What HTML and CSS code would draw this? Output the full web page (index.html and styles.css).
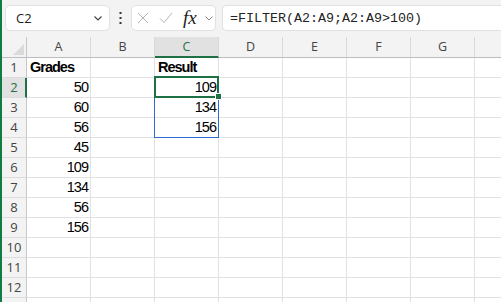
FILE: index.html
```html
<!DOCTYPE html>
<html lang="en">
<head>
  <meta charset="UTF-8" />
  <title>Grades - Sheet</title>
  <link rel="stylesheet" href="styles.css">
</head>

<body>

  <!-- Formula bar -->
  <div class="toolbar">
    <div class="name-box">
      <span>C2</span>
      <svg width="8" height="5" viewBox="0 0 8 5"><path d="M0.5 0.5 L4 4 L7.5 0.5" fill="none" stroke="#444" stroke-width="1.2"/></svg>
    </div>
    <div class="grip">
      <svg width="3" height="12" viewBox="0 0 3 12"><rect x="0.5" y="0" width="2" height="2" fill="#333"/><rect x="0.5" y="5" width="2" height="2" fill="#333"/><rect x="0.5" y="10" width="2" height="2" fill="#333"/></svg>
    </div>
    <div class="fx-box">
      <svg class="cancel" width="12" height="12" viewBox="0 0 12 12"><path d="M1 1 L11 11 M11 1 L1 11" stroke="#b4b4b4" stroke-width="1"/></svg>
      <svg class="enter" width="14" height="12" viewBox="0 0 14 12"><path d="M1 6.5 L5 10.5 L13 1" fill="none" stroke="#b4b4b4" stroke-width="1"/></svg>
      <span class="fx">fx</span>
      <svg width="8" height="5" viewBox="0 0 8 5"><path d="M0.5 0.5 L4 4 L7.5 0.5" fill="none" stroke="#8a8a8a" stroke-width="1"/></svg>
    </div>
    <div class="formula">=FILTER(A2:A9;A2:A9&gt;100)</div>
  </div>

  <!-- Grid -->
  <div class="sheet-wrap">
    <div class="sheet" id="sheet"></div>
    <div class="spill"></div>
    <div class="active-cell"></div>
    <div class="fill-handle"></div>
  </div>

  <script>
    const sheet = document.getElementById('sheet');
    // last column only peeks in at the right edge, so it gets no label
    const columns = ['A', 'B', 'C', 'D', 'E', 'F', 'G', ''];
    const colA = ['Grades', 50, 60, 56, 45, 109, 134, 56, 156];
    const colC = ['Result', 109, 134, 156];

    // header row
    const corner = document.createElement('div');
    corner.className = 'corner';
    sheet.appendChild(corner);
    columns.forEach(col => {
      const head = document.createElement('div');
      head.className = 'col-head' + (col === 'C' ? ' selected' : '');
      head.textContent = col;
      sheet.appendChild(head);
    });

    // data rows (row 13 only peeks in at the bottom, no label visible)
    for (let r = 1; r <= 13; r++) {
      const head = document.createElement('div');
      head.className = 'row-head' + (r === 2 ? ' selected' : '');
      head.textContent = r < 13 ? r : '';
      sheet.appendChild(head);

      columns.forEach(col => {
        const cell = document.createElement('div');
        cell.className = 'cell';
        let value = '';
        if (col === 'A' && colA[r - 1] !== undefined) value = colA[r - 1];
        if (col === 'C' && colC[r - 1] !== undefined) value = colC[r - 1];
        if (r === 1 && value !== '') cell.classList.add('bold');
        if (typeof value === 'number') cell.classList.add('num');
        cell.textContent = value;
        sheet.appendChild(cell);
      });
    }
  </script>

</body>
</html>
```

FILE: styles.css
```css
html, body {
  height: 100%;
}

body {
  margin: 0;
  border-left: 2px solid #107c41;
  overflow: hidden;
  background: #fff;
  font-family: "Liberation Sans", Arial, sans-serif;
  color: #000;
}

/* Formula bar */
.toolbar {
  height: 37px;
  box-sizing: border-box;
  padding: 5px 0 0 3px;
  background: #f3f3f3;
  display: flex;
  align-items: flex-start;
}

.name-box,
.fx-box,
.formula {
  height: 26px;
  box-sizing: border-box;
  background: #fff;
  border: 1px solid #e1e1e1;
  border-radius: 5px;
  display: flex;
  align-items: center;
}

.name-box {
  width: 105px;
  padding: 0 7px 0 10px;
  justify-content: space-between;
  font-family: "Open Sans", sans-serif;
  font-size: 13px;
  color: #222;
}

.grip {
  width: 21px;
  height: 26px;
  display: flex;
  align-items: center;
  justify-content: center;
}

.fx-box {
  width: 85px;
  padding-left: 5px;
}

.fx-box .cancel {
  margin-right: 10px;
}

.fx-box .enter {
  margin-right: 10px;
}

.fx {
  font-family: "Liberation Serif", serif;
  font-style: italic;
  font-size: 19px;
  color: #222;
  width: 17px;
  margin-right: 5px;
  line-height: 24px;
}

.formula {
  flex: 1;
  min-width: 0;
  margin-left: 6px;
  padding-left: 7px;
  border-right: none;
  border-radius: 5px 0 0 5px;
  font-family: "Liberation Mono", monospace;
  font-size: 13.33px;
  color: #222;
  white-space: nowrap;
}

/* Grid */
.sheet-wrap {
  position: relative;
}

.sheet {
  display: grid;
  grid-template-columns: 25px repeat(8, 64px);
  grid-template-rows: 21px;
  grid-auto-rows: 20px;
}

.corner,
.col-head,
.row-head,
.cell {
  box-sizing: border-box;
  border-right: 1px solid #e1e1e1;
  border-bottom: 1px solid #e1e1e1;
}

.corner {
  background: #f3f3f3;
  border-right-color: #c8c8c8;
  border-bottom-color: #bdbdbd;
  position: relative;
}

.corner::after {
  content: "";
  position: absolute;
  right: 2px;
  bottom: 2px;
  border-left: 11px solid transparent;
  border-bottom: 11px solid #dadada;
}

.col-head {
  background: #f3f3f3;
  border-right-color: #d8d8d8;
  border-bottom-color: #bdbdbd;
  font-family: "Open Sans", sans-serif;
  font-size: 12.5px;
  color: #444;
  text-align: center;
  line-height: 20px;
}

.col-head.selected {
  background: #e1e1e1;
  color: #1e7145;
  border-bottom: 2px solid #1e7145;
  line-height: 19px;
}

.row-head {
  background: #f3f3f3;
  border-right-color: #c8c8c8;
  border-bottom-color: #dcdcdc;
  font-family: "Open Sans", sans-serif;
  font-size: 13px;
  color: #444;
  text-align: center;
  line-height: 19px;
}

.row-head.selected {
  background: #e1e1e1;
  color: #1e7145;
  border-right: 2px solid #1e7145;
  padding-left: 1px;
}

.cell {
  font-size: 14.5px;
  letter-spacing: -1px;
  line-height: 19px;
  padding: 0 2px 0 3px;
  white-space: nowrap;
}

.cell.num {
  text-align: right;
}

.cell.bold {
  font-weight: bold;
}

/* Selection overlays */
.spill {
  position: absolute;
  left: 152px;
  top: 39px;
  width: 65px;
  height: 62px;
  box-sizing: border-box;
  border: 1px solid #2f6bd1;
}

.active-cell {
  position: absolute;
  left: 152px;
  top: 39px;
  width: 65px;
  height: 22px;
  box-sizing: border-box;
  border: 2px solid #1e7145;
}

.fill-handle {
  position: absolute;
  left: 213px;
  top: 56px;
  width: 7px;
  height: 7px;
  box-sizing: border-box;
  background: #1e7145;
  border: 1px solid #fff;
}
```
